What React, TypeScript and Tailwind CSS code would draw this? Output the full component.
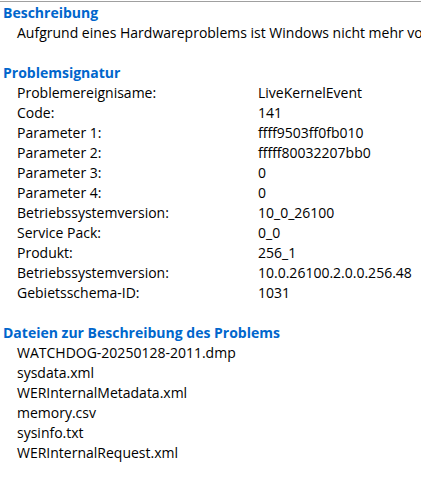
const signatur: [string, string][] = [
  ['Problemereignisame:', 'LiveKernelEvent'],
  ['Code:', '141'],
  ['Parameter 1:', 'ffff9503ff0fb010'],
  ['Parameter 2:', 'fffff80032207bb0'],
  ['Parameter 3:', '0'],
  ['Parameter 4:', '0'],
  ['Betriebssystemversion:', '10_0_26100'],
  ['Service Pack:', '0_0'],
  ['Produkt:', '256_1'],
  ['Betriebssystemversion:', '10.0.26100.2.0.0.256.48'],
  ['Gebietsschema-ID:', '1031'],
];

const dateien = [
  'WATCHDOG-20250128-2011.dmp',
  'sysdata.xml',
  'WERInternalMetadata.xml',
  'memory.csv',
  'sysinfo.txt',
  'WERInternalRequest.xml',
];

function Heading({ children }: { children: string }) {
  return <div className="h-5 pl-[3px] font-bold text-[#0066cc]">{children}</div>;
}

export default function App() {
  return (
    <div
      className="w-[421px] h-[480px] overflow-hidden bg-white pt-px text-[14px] leading-5 text-black"
      style={{ fontFamily: '"Open Sans", "Noto Sans", sans-serif' }}
    >
      <div className="border-t border-[#a0a0a0] pt-px">
        <Heading>Beschreibung</Heading>
        <div className="h-5 pl-[17px] whitespace-nowrap">
          Aufgrund eines Hardwareproblems ist Windows nicht mehr voll funktionsfähig.
        </div>
        <div className="h-5" />

        <Heading>Problemsignatur</Heading>
        {signatur.map(([k, v], i) => (
          <div key={i} className="flex h-5 pl-[17px] whitespace-nowrap">
            <span className="w-[241px] shrink-0">{k}</span>
            <span>{v}</span>
          </div>
        ))}
        <div className="h-5" />

        <Heading>Dateien zur Beschreibung des Problems</Heading>
        {dateien.map((f) => (
          <div key={f} className="h-5 pl-[17px] whitespace-nowrap">
            {f}
          </div>
        ))}
      </div>
    </div>
  );
}
